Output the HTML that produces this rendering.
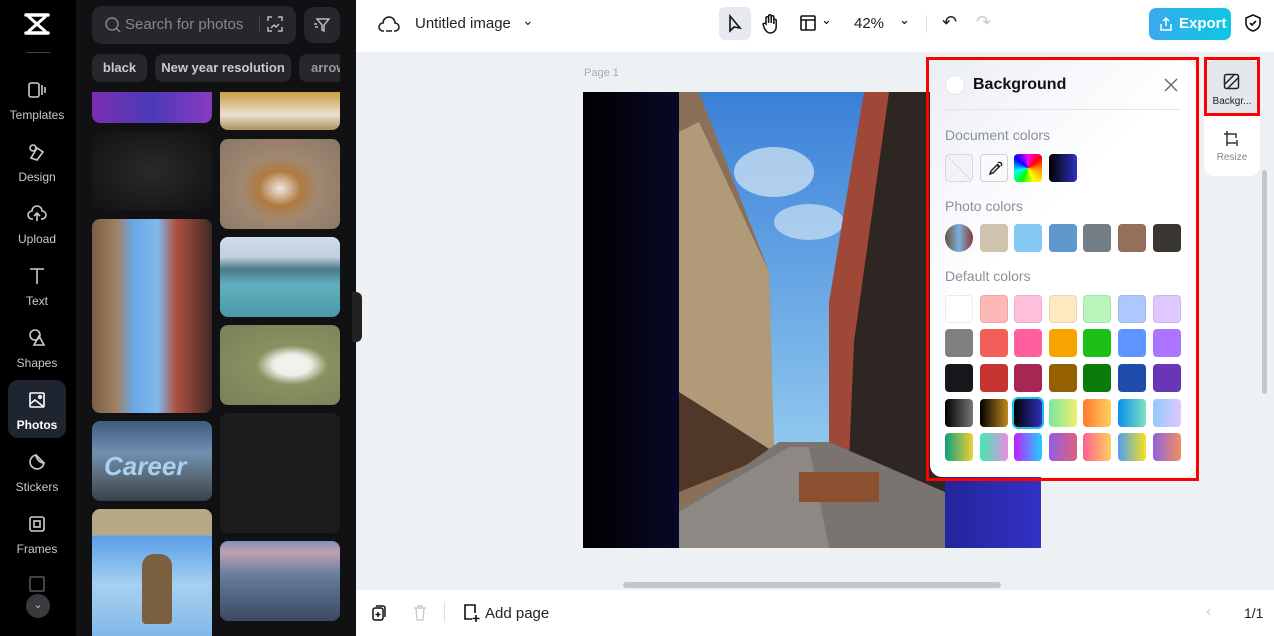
<!DOCTYPE html>
<html><head><meta charset="utf-8"><style>
*{box-sizing:border-box;margin:0;padding:0}
body{width:1274px;height:636px;overflow:hidden;font-family:"Liberation Sans",sans-serif;background:#eef1f4;position:relative}
.abs{position:absolute}
#rail{left:0;top:0;width:76px;height:636px;background:#000}
#lib{left:76px;top:0;width:280px;height:636px;background:#111114}
.nav{position:absolute;left:8px;width:58px;height:58px;color:#c9c9cc;font-size:12px;text-align:center}
.nav span{position:absolute;left:0;right:0;top:38px}
.nav svg{position:absolute;left:19px;top:10px}
.tile{position:absolute;border-radius:8px;overflow:hidden}
#top{left:356px;top:0;width:918px;height:52px;background:#fff}
#bot{left:356px;top:590px;width:918px;height:46px;background:#fff}
.sw{position:absolute;width:28px;height:28px;border-radius:4px}
.lbl{position:absolute;left:945px;font-size:14px;color:#8a8f99}
</style></head><body>
<div id="rail" class="abs">
 <svg class="abs" style="left:24px;top:12px" width="26" height="24" viewBox="0 0 26 24"><path d="M2 3h22M2 21h22" stroke="#fff" stroke-width="3.5" stroke-linecap="round"/><path d="M5 5L21 19M21 5L5 19" stroke="#fff" stroke-width="3" stroke-linecap="round"/></svg>
 <div class="abs" style="left:26px;top:52px;width:24px;height:1px;background:#444"></div>
 <div class="nav" style="top:70px"><svg width="20" height="20" viewBox="0 0 20 20" fill="none" stroke="#ccc" stroke-width="1.6"><rect x="2" y="3" width="10" height="14" rx="2"/><path d="M15 5v10M18 7v6"/></svg><span>Templates</span></div>
 <div class="nav" style="top:132px"><svg width="20" height="20" viewBox="0 0 20 20" fill="none" stroke="#ccc" stroke-width="1.6"><circle cx="6" cy="6" r="3"/><path d="M4 16l6-10 6 4-6 8z"/></svg><span>Design</span></div>
 <div class="nav" style="top:194px"><svg width="20" height="20" viewBox="0 0 20 20" fill="none" stroke="#ccc" stroke-width="1.6"><path d="M6 15H5a4 4 0 010-8 5 5 0 0110 0 4 4 0 010 8h-1M10 17V9M7 12l3-3 3 3"/></svg><span>Upload</span></div>
 <div class="nav" style="top:256px"><svg width="20" height="20" viewBox="0 0 20 20" fill="none" stroke="#ccc" stroke-width="1.6"><path d="M3 3h14M10 3v15"/></svg><span>Text</span></div>
 <div class="nav" style="top:318px"><svg width="20" height="20" viewBox="0 0 20 20" fill="none" stroke="#ccc" stroke-width="1.6"><circle cx="8" cy="7" r="5"/><path d="M12 8l5 9H7z"/></svg><span>Shapes</span></div>
 <div class="nav" style="top:380px;background:#1f2530;border-radius:10px;color:#fff;font-weight:bold"><svg width="20" height="20" viewBox="0 0 20 20" fill="none" stroke="#fff" stroke-width="1.6"><rect x="3" y="3" width="14" height="14" rx="1"/><path d="M3 14l5-4 9 7"/><circle cx="13" cy="7" r="1.3"/></svg><span>Photos</span></div>
 <div class="nav" style="top:442px"><svg width="20" height="20" viewBox="0 0 20 20" fill="none" stroke="#ccc" stroke-width="1.6"><path d="M17 11a7 7 0 11-8-8c0 4 4 8 8 8zM17 11l-8-8"/></svg><span>Stickers</span></div>
 <div class="nav" style="top:504px"><svg width="20" height="20" viewBox="0 0 20 20" fill="none" stroke="#ccc" stroke-width="1.6"><rect x="3" y="3" width="14" height="14" rx="2"/><rect x="7" y="7" width="6" height="6"/></svg><span>Frames</span></div>
 <div class="abs" style="left:29px;top:576px;width:16px;height:16px;border:2px solid #444;border-radius:2px"></div>
 <div class="abs" style="left:26px;top:594px;width:24px;height:24px;border-radius:50%;background:#3a3a3e;color:#bbb;font-size:11px;text-align:center;line-height:22px">⌄</div>
</div>
<div id="lib" class="abs">
 <div class="abs" style="left:16px;top:6px;width:204px;height:38px;background:#26262b;border-radius:10px"></div>
 <svg class="abs" style="left:28px;top:16px" width="18" height="18" viewBox="0 0 18 18" fill="none" stroke="#888" stroke-width="1.5"><circle cx="8" cy="8" r="6"/><path d="M12.5 12.5L16 16"/></svg>
 <div class="abs" style="left:49px;top:16px;color:#888;font-size:15px">Search for photos</div>
 <div class="abs" style="left:183px;top:16px;width:1px;height:16px;background:#444"></div>
 <svg class="abs" style="left:190px;top:15px" width="18" height="18" viewBox="0 0 18 18" fill="none" stroke="#bbb" stroke-width="1.5"><path d="M2 6V2h4M12 2h4v4M16 12v4h-4M6 16H2v-4M5 13l3-3 2 2 3-3"/></svg>
 <div class="abs" style="left:228px;top:7px;width:36px;height:36px;background:#26262b;border-radius:10px"></div>
 <svg class="abs" style="left:237px;top:16px" width="18" height="18" viewBox="0 0 18 18" fill="none" stroke="#bbb" stroke-width="1.5"><path d="M4 3h12l-5 6v6l-2-1V9zM1 8h3M2 11h3"/></svg>
 <div class="abs" style="left:16px;top:54px;width:55px;height:28px;background:#26262b;border-radius:8px;color:#ccc;font-size:13px;line-height:28px;text-align:center;font-weight:bold">black</div>
 <div class="abs" style="left:79px;top:54px;width:136px;height:28px;background:#26262b;border-radius:8px;color:#ccc;font-size:13px;line-height:28px;text-align:center;font-weight:bold">New year resolution</div>
 <div class="abs" style="left:223px;top:54px;width:41px;height:28px;background:#26262b;border-radius:8px 0 0 8px;color:#999;font-size:13px;line-height:28px;padding-left:12px;overflow:hidden;font-weight:bold">arrow</div>
 <div class="tile" style="left:16px;top:92px;width:120px;height:31px;border-radius:0 0 8px 8px;background:linear-gradient(90deg,#7a2fb0,#4a3ab8,#8a3ac0)"></div>
 <div class="tile" style="left:144px;top:92px;width:120px;height:38px;border-radius:0 0 8px 8px;background:linear-gradient(#c9a040,#e8e0d0 60%,#b09060)"></div>
 <div class="tile" style="left:16px;top:131px;width:120px;height:80px;background:radial-gradient(#2a2a2a,#111)"></div>
 <div class="tile" style="left:144px;top:139px;width:120px;height:90px;background:radial-gradient(ellipse at 50% 55%,#f0e8e0 0,#b07a40 25%,#a08870 45%,#8a7668 100%)"></div>
 <div class="tile" style="left:16px;top:219px;width:120px;height:194px;background:linear-gradient(90deg,#7a6048 0,#a08060 20%,#6aa8e8 35%,#80b8e8 55%,#b05040 70%,#402a28 100%)"></div>
 <div class="tile" style="left:144px;top:237px;width:120px;height:80px;background:linear-gradient(#d0dce8 0,#c0d0e0 25%,#4a7a88 40%,#60b0c0 60%,#4a98a8 100%)"></div>
 <div class="tile" style="left:144px;top:325px;width:120px;height:80px;background:radial-gradient(ellipse at 60% 50%,#f4f4f0 0,#f0f0ea 18%,#8a9060 35%,#7a8058 100%)"></div>
 <div class="tile" style="left:16px;top:421px;width:120px;height:80px;background:linear-gradient(#405a80,#7090b0 40%,#5a6a78 70%,#3a4048)"><div style="position:absolute;left:12px;top:30px;color:#a8d0f0;font:bold italic 26px 'Liberation Sans',sans-serif">Career</div></div>
 <div class="tile" style="left:144px;top:413px;width:120px;height:120px;background:#1c1c1f"></div>
 <div class="tile" style="left:16px;top:509px;width:120px;height:127px;border-radius:8px 8px 0 0;background:linear-gradient(#b8a888 0,#b8a888 20%,#5aa0e8 22%,#a8d0f0 60%,#80b8e8 100%)"><div style="position:absolute;left:50px;top:45px;width:30px;height:70px;background:#7a6040;border-radius:12px 12px 4px 4px"></div></div>
 <div class="tile" style="left:144px;top:541px;width:120px;height:80px;background:linear-gradient(#8090b8 0,#c0a0b0 15%,#6a80a0 40%,#3a4a60 100%)"></div>
 <div class="abs" style="left:276px;top:292px;width:10px;height:50px;background:#222;border-radius:0 6px 6px 0"></div>
</div>
<div id="top" class="abs">
 <svg class="abs" style="left:22px;top:14px" width="22" height="20" viewBox="0 0 22 20" fill="none" stroke="#222" stroke-width="1.6"><path d="M6 17H5a4 4 0 010-8 6 6 0 0112 0 4 4 0 010 8h-1M8 17h6"/></svg>
 <div class="abs" style="left:59px;top:15px;font-size:15px;color:#222">Untitled image</div>
 <div class="abs" style="left:166px;top:12px;font-size:14px;color:#222">⌄</div>
 <div class="abs" style="left:363px;top:7px;width:32px;height:33px;background:#e6e9ee;border-radius:6px"></div>
 <svg class="abs" style="left:371px;top:14px" width="18" height="20" viewBox="0 0 18 20" fill="none" stroke="#111" stroke-width="1.6"><path d="M3 2v15l4-4 6 1z"/></svg>
 <svg class="abs" style="left:404px;top:13px" width="20" height="22" viewBox="0 0 20 22" fill="none" stroke="#111" stroke-width="1.5"><path d="M6 11V5a1.3 1.3 0 012.6 0v5V3a1.3 1.3 0 012.6 0v7V4a1.3 1.3 0 012.6 0v7V7a1.3 1.3 0 012.4 0v7a6 6 0 01-6 6c-3 0-4-2-6-5L3 11c1-1 2-1 3 0z"/></svg>
 <svg class="abs" style="left:443px;top:14px" width="18" height="18" viewBox="0 0 18 18" fill="none" stroke="#111" stroke-width="1.6"><rect x="2" y="2" width="14" height="14" rx="1"/><path d="M2 6h14M7 6v10"/></svg>
 <div class="abs" style="left:465px;top:12px;font-size:13px">⌄</div>
 <div class="abs" style="left:498px;top:15px;font-size:15px;color:#222">42%</div>
 <div class="abs" style="left:543px;top:12px;font-size:13px">⌄</div>
 <div class="abs" style="left:570px;top:15px;width:1px;height:18px;background:#ddd"></div>
 <div class="abs" style="left:586px;top:12px;font-size:18px;color:#222">↶</div>
 <div class="abs" style="left:620px;top:12px;font-size:18px;color:#ccc">↷</div>
 <div class="abs" style="left:793px;top:8px;width:82px;height:32px;border-radius:7px;background:linear-gradient(90deg,#3aa8f0,#0cc8e0);color:#fff;font-size:15px;font-weight:bold;line-height:32px;padding-left:30px">Export</div>
 <svg class="abs" style="left:803px;top:16px" width="14" height="16" viewBox="0 0 14 16" fill="none" stroke="#fff" stroke-width="1.5"><path d="M7 10V2M4 5l3-3 3 3M2 8v6h10V8"/></svg>
 <svg class="abs" style="left:888px;top:13px" width="18" height="20" viewBox="0 0 18 20" fill="none" stroke="#111" stroke-width="1.6"><path d="M9 2l7 3v5c0 4-3 7-7 8-4-1-7-4-7-8V5z"/><path d="M6 10l2 2 4-4"/></svg>
</div>
<div class="abs" style="left:584px;top:67px;font-size:11px;color:#aaa">Page 1</div>
<div class="abs" style="left:583px;top:92px;width:458px;height:456px;background:linear-gradient(90deg,#000 0,#0a0a30 25%,#1a1a80 65%,#3232c4 100%)"></div>
<svg class="abs" style="left:679px;top:92px" width="266" height="456" viewBox="0 0 266 456">
 <defs><linearGradient id="sky" x1="0" y1="0" x2="0" y2="1"><stop offset="0" stop-color="#3a80d8"/><stop offset="1" stop-color="#a8dcf4"/></linearGradient></defs>
 <rect width="266" height="456" fill="url(#sky)"/>
 <ellipse cx="95" cy="80" rx="40" ry="25" fill="#d8e8f4" opacity=".7"/>
 <ellipse cx="130" cy="130" rx="35" ry="18" fill="#e0ecf6" opacity=".6"/>
 <polygon points="0,0 20,0 90,180 95,360 0,420" fill="#8a7058"/>
 <polygon points="20,30 90,180 95,360 60,370 0,300 0,40" fill="#b09a78"/>
 <polygon points="0,300 95,360 100,360 0,400" fill="#503828"/>
 <polygon points="266,0 185,0 150,210 150,360 266,420" fill="#a04838"/>
 <polygon points="266,0 210,0 175,250 170,370 266,430" fill="#2e2622"/>
 <polygon points="100,350 150,350 266,400 266,456 0,456 0,420" fill="#7a7470"/>
 <polygon points="0,420 110,355 130,355 150,456 0,456" fill="#8e8884"/>
 <rect x="120" y="380" width="80" height="30" fill="#8a5030"/>
</svg>
<div class="abs" style="left:623px;top:582px;width:378px;height:6px;background:#c3c7ca;border-radius:3px"></div>
<div class="abs" style="left:1262px;top:170px;width:5px;height:224px;background:#c3c7ca;border-radius:3px"></div>
<div class="abs" style="left:926px;top:57px;width:273px;height:424px;border:3px solid #f00"></div>
<div class="abs" style="left:930px;top:61px;width:266px;height:416px;background:linear-gradient(135deg,#eceef6,#fff 40%);border-radius:12px"></div>
<div class="abs" style="left:945px;top:75px;width:20px;height:20px;border-radius:50%;background:#fff;border:1px solid #e4e4e8"></div>
<div class="abs" style="left:973px;top:76px;font-size:16px;font-weight:bold;color:#111">Background</div>
<svg class="abs" style="left:1163px;top:77px" width="16" height="16" viewBox="0 0 16 16" stroke="#666" stroke-width="1.4"><path d="M2 2l12 12M14 2L2 14"/></svg>
<div class="abs" style="left:945px;top:109px;width:236px;height:1px;background:#e2e4ea"></div>
<div class="lbl" style="top:127px">Document colors</div>
<div class="sw" style="left:945px;top:154px;border:1px solid #d8d8de;background:linear-gradient(45deg,transparent 49%,#bbb 50%,transparent 51%) #f3f3f6"></div>
<div class="sw" style="left:980px;top:154px;border:1px solid #d0d0d8;background:#fafafc"><svg style="position:absolute;left:6px;top:6px" width="16" height="16" viewBox="0 0 16 16" fill="none" stroke="#222" stroke-width="1.5"><path d="M10 3l3 3M3 13l1-3 6-6 2 2-6 6zM11 2a1.5 1.5 0 013 3"/></svg></div>
<div class="sw" style="left:1014px;top:154px;background:conic-gradient(#f0f,#f00,#fa0,#ff0,#0f0,#0ff,#00f,#f0f)"></div>
<div class="sw" style="left:1049px;top:154px;background:linear-gradient(90deg,#000,#3030c0)"></div>
<div class="lbl" style="top:198px">Photo colors</div>
<div class="sw" style="left:945px;top:224px;border-radius:50%;background:linear-gradient(90deg,#6a5440,#7ab0e0 50%,#8a3a30)"></div>
<div class="sw" style="left:980px;top:224px;background:#cfc3b0"></div>
<div class="sw" style="left:1014px;top:224px;background:#84c8f4"></div>
<div class="sw" style="left:1049px;top:224px;background:#5e98cc"></div>
<div class="sw" style="left:1083px;top:224px;background:#737e86"></div>
<div class="sw" style="left:1118px;top:224px;background:#94705a"></div>
<div class="sw" style="left:1153px;top:224px;background:#3a3632"></div>
<div class="lbl" style="top:268px">Default colors</div>
<div id="dc"></div>
<script>
const rows=[
["#fff","#ffb8b8","#ffc0dc","#ffe9c0","#b9f5b8","#adc8ff","#dec8ff"],
["#808080","#f25f58","#ff5f9c","#f8a400","#1ec018","#5e94ff","#ab75ff"],
["#16171c","#c4352f","#a82654","#946000","#0a7a08","#1f4eaa","#6a36b8"],
["linear-gradient(90deg,#000,#777)","linear-gradient(90deg,#000,#c08a20)","linear-gradient(90deg,#000,#3030c0)","linear-gradient(90deg,#7ae8a0,#f0ee70)","linear-gradient(90deg,#ff7a30,#ffd060)","linear-gradient(90deg,#0a90f0,#80e0c0)","linear-gradient(90deg,#90c8ff,#e0c8ff)"],
["linear-gradient(90deg,#10a080,#f0d030)","linear-gradient(90deg,#40e8b0,#e890e0)","linear-gradient(90deg,#c020ff,#20d0ff)","linear-gradient(90deg,#9060e0,#e06080)","linear-gradient(90deg,#ff6090,#ffd060)","linear-gradient(90deg,#50a0f0,#f8e020)","linear-gradient(90deg,#9060e0,#f09060)"]];
const xs=[945,980,1014,1049,1083,1118,1153],ys=[295,329,364,399,433];let h="";
rows.forEach((r,i)=>r.forEach((c,j)=>{let b=(i==0)?"border:1px solid rgba(0,0,0,.08);":"";if(i==3&&j==2)b="outline:2px solid #20c0e8;outline-offset:0;";h+=`<div class="sw" style="left:${xs[j]}px;top:${ys[i]}px;background:${c};${b}"></div>`}));
document.getElementById("dc").innerHTML=h;
</script>
<div class="abs" style="left:1204px;top:58px;width:56px;height:118px;background:#fff;border-radius:10px"></div>
<div class="abs" style="left:1206px;top:60px;width:52px;height:54px;background:#e4e7eb;border-radius:8px"></div>
<div class="abs" style="left:1204px;top:57px;width:56px;height:59px;border:3px solid #f00"></div>
<svg class="abs" style="left:1223px;top:73px" width="17" height="17" viewBox="0 0 17 17" fill="none" stroke="#222" stroke-width="1.5"><rect x="1.5" y="1.5" width="14" height="14" rx="2"/><path d="M2 11l9-9M5 15l10-10"/></svg>
<div class="abs" style="left:1206px;top:96px;width:52px;text-align:center;font-size:10px;color:#222">Backgr...</div>
<svg class="abs" style="left:1223px;top:130px" width="17" height="17" viewBox="0 0 17 17" fill="none" stroke="#333" stroke-width="1.5"><path d="M4 1v15M1 4h12v4M13 13H4M14 10v6"/></svg>
<div class="abs" style="left:1206px;top:152px;width:52px;text-align:center;font-size:10px;color:#888">Resize</div>
<div id="bot" class="abs">
 <svg class="abs" style="left:15px;top:14px" width="16" height="18" viewBox="0 0 16 18" fill="none" stroke="#111" stroke-width="1.5"><rect x="2" y="4" width="10" height="12" rx="2"/><path d="M5 2h7a2 2 0 012 2v9M7 8v5M4.5 10.5h5"/></svg>
 <svg class="abs" style="left:57px;top:14px" width="14" height="18" viewBox="0 0 14 18" fill="none" stroke="#ccc" stroke-width="1.4"><path d="M1 4h12M5 4V2h4v2M3 4l1 12h6l1-12"/></svg>
 <div class="abs" style="left:88px;top:12px;width:1px;height:20px;background:#e0e0e0"></div>
 <svg class="abs" style="left:106px;top:13px" width="18" height="20" viewBox="0 0 18 20" fill="none" stroke="#111" stroke-width="1.6"><path d="M10 16H3V2h10v8M14 12v7M10.5 15.5h7"/></svg>
 <div class="abs" style="left:129px;top:15px;font-size:15px;color:#222">Add page</div>
 <div class="abs" style="left:850px;top:13px;font-size:16px;color:#ccc">‹</div>
 <div class="abs" style="left:888px;top:15px;font-size:14px;color:#222">1/1</div>
</div>
</body></html>
